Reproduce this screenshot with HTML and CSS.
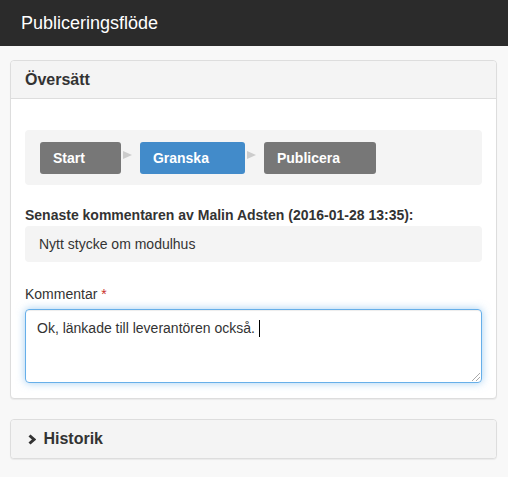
FILE: index.html
```html
<!DOCTYPE html>
<html lang="sv">
<head>
    <meta charset="UTF-8">
    <title>Publiceringsflöde</title>
    <link rel="stylesheet" href="styles.css">
</head>
<body>
    <!-- Top bar -->
    <div class="topbar">Publiceringsflöde</div>

    <div class="page">
        <!-- Translate panel -->
        <div class="panel">
            <div class="panel-heading">Översätt</div>
            <div class="panel-body">
                <div class="steps">
                    <span class="step">Start</span>
                    <span class="step-arrow"></span>
                    <span class="step active">Granska</span>
                    <span class="step-arrow"></span>
                    <span class="step">Publicera</span>
                </div>

                <div class="last-label">Senaste kommentaren av Malin Adsten (2016-01-28 13:35):</div>
                <div class="last-comment">Nytt stycke om modulhus</div>

                <label class="field-label">Kommentar <span class="required">*</span></label>
                <div class="textbox">Ok, länkade till leverantören också. <span class="caret"></span></div>
            </div>
        </div>

        <!-- History panel -->
        <div class="panel collapsed">
            <div class="panel-heading">
                <svg class="chevron" width="8" height="11" viewBox="0 0 8 11">
                    <polyline points="1.5,1.5 6,5.5 1.5,9.5" fill="none" stroke="#333" stroke-width="3"/>
                </svg>
                Historik
            </div>
        </div>
    </div>
</body>
</html>
```

FILE: styles.css
```css
body {
    margin: 0;
    background-color: #f8f8f8;
    font-family: "Liberation Sans", Arial, sans-serif;
    color: #333;
}

.topbar {
    height: 46px;
    line-height: 46px;
    padding-left: 21px;
    background-color: #2b2b2b;
    color: #fff;
    font-size: 18px;
}

.page {
    padding: 14px 11px 0 10px;
}

.panel {
    background-color: #fff;
    border: 1px solid #ddd;
    border-radius: 4px;
    box-shadow: 0 1px 1px rgba(0, 0, 0, 0.06);
    margin-bottom: 20px;
}

.panel-heading {
    height: 37px;
    line-height: 37px;
    padding: 0 14px;
    background-color: #f4f4f4;
    border-bottom: 1px solid #ddd;
    border-radius: 4px 4px 0 0;
    font-size: 16px;
    font-weight: bold;
}

.panel.collapsed .panel-heading {
    height: 38px;
    line-height: 38px;
    border-bottom: none;
    border-radius: 4px;
    padding-left: 17px;
}

.chevron {
    margin-right: 3px;
    vertical-align: -1px;
}

.panel-body {
    padding: 31px 14px 15px 14px;
}

/* Workflow steps */
.steps {
    display: flex;
    align-items: center;
    padding: 12px 15px 11px 15px;
    background-color: #f4f4f4;
    border-radius: 4px;
}

.step {
    height: 32px;
    line-height: 32px;
    padding: 0 36px 0 13px;
    background-color: #777;
    color: #fff;
    font-size: 14px;
    font-weight: bold;
    border-radius: 3px;
}

.step.active {
    background-color: #428bca;
}

.step-arrow {
    width: 0;
    height: 0;
    border-top: 4.5px solid transparent;
    border-bottom: 4.5px solid transparent;
    border-left: 9px solid #ccc;
    margin: 0 8px 6px 2px;
}

.last-label {
    margin-top: 21px;
    font-size: 14px;
    font-weight: bold;
    line-height: 18px;
}

.last-comment {
    margin-top: 2px;
    height: 36px;
    line-height: 36px;
    padding: 0 14px;
    background-color: #f4f4f4;
    border-radius: 4px;
    font-size: 14px;
}

.field-label {
    display: block;
    margin-top: 22px;
    font-size: 14px;
    line-height: 20px;
}

.required {
    color: #c9302c;
}

.textbox {
    position: relative;
    margin-top: 5px;
    height: 56px;
    padding: 8px 11px;
    border: 1px solid #66afe9;
    border-radius: 4px;
    box-shadow: inset 0 1px 1px rgba(0, 0, 0, 0.075), 0 0 8px rgba(102, 175, 233, 0.6);
    font-size: 14px;
    line-height: 20px;
}

.caret {
    display: inline-block;
    width: 1px;
    height: 17px;
    background-color: #000;
    vertical-align: -4px;
}

/* resize grip */
.textbox::after {
    content: "";
    position: absolute;
    right: 1px;
    bottom: 1px;
    width: 10px;
    height: 10px;
    background: repeating-linear-gradient(135deg, transparent 0, transparent 2px, #aaa 2px, #aaa 3px);
    clip-path: polygon(100% 0, 100% 100%, 0 100%);
}
```
